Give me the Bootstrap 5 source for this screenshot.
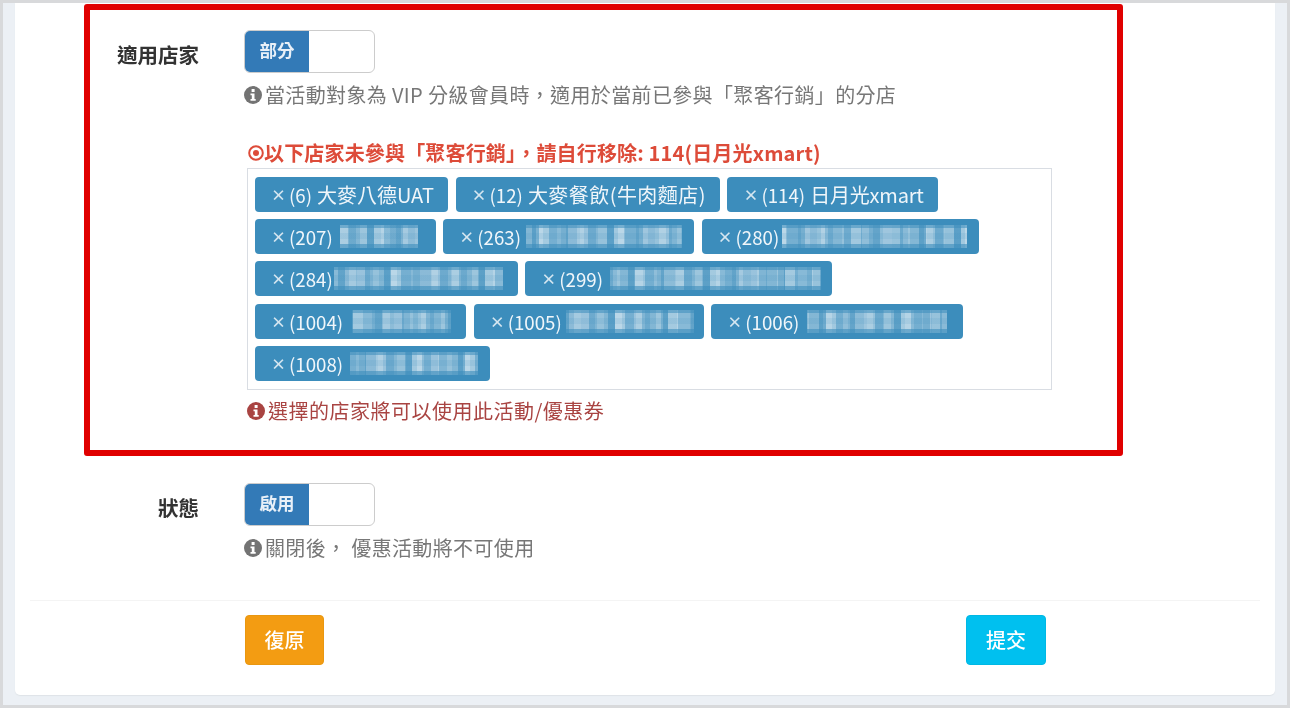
<!doctype html>
<html lang="zh-Hant">
<head>
<meta charset="utf-8">
<title>優惠活動</title>
<link href="https://cdn.jsdelivr.net/npm/bootstrap@5.3.0/dist/css/bootstrap.min.css" rel="stylesheet">
<style>
html,body{margin:0;height:711px;overflow:hidden;background:#fff}
body{font-family:"Noto Sans CJK TC","Liberation Sans",sans-serif;color:#333}
.frame{width:1290px;height:708px;border:3px solid #d8d9db;background:#ecf0f5;padding:0 12px 10px;filter:blur(.6px)}
.panel{background:#fff;height:100%;border-radius:0 0 5px 5px;box-shadow:0 1px 1px #dfe3e8;padding-top:1px;position:relative}
.redbox{margin-left:69px;width:1039px;height:452px;border:6px solid #e00000;border-radius:3px;padding-top:20px}
.field{display:flex;align-items:flex-start}
.field-status{margin-left:75px;margin-top:27px}
.lbl{width:109px;flex:none;text-align:right;font-size:20.5px;font-weight:700;line-height:28px;padding-top:10px;margin-right:45px}
.sw{display:flex;width:131px;height:43px;border:1px solid #ccc;border-radius:6px;overflow:hidden;background:#fff}
.sw-on{width:64px;background:#337ab7;color:#e8f0f8;font-size:17.5px;font-weight:700;display:flex;align-items:center;justify-content:center;padding-bottom:3px;line-height:1}
.hint{font-size:20px;line-height:28px;color:#777;margin-top:8px;display:flex;align-items:center;letter-spacing:.36px;white-space:nowrap}
.hint svg{margin-right:3px;flex:none}
.warn{color:#dd4b39;font-weight:700;font-size:20px;line-height:26px;margin:31px 0 0 4px;display:flex;align-items:center;white-space:nowrap;letter-spacing:.17px}
.picker{width:805px;height:222px;margin:2px 0 0 3px;border:1px solid #d9dde3;padding:8px 7px 0;display:flex;flex-wrap:wrap;align-content:flex-start;column-gap:7.5px;row-gap:7.2px}
.tagx{height:35px;background:#3c8dbc;color:#f0f6fa;border-radius:4px;font-size:18.7px;line-height:35px;padding:0 14px 0 16px;display:flex;align-items:center;white-space:nowrap;font-weight:400}
.tagx .xm{font-size:15px;width:11px;margin-right:7px;font-weight:700;color:#d5e6f0;line-height:1;text-align:center}
.tagx .nm{margin-left:5px;font-size:20px}
.tagx .nm-wide{letter-spacing:.45px}
.tagx .nm-tight{letter-spacing:-.2px}
.mos{display:block;height:23px;flex:none;
 background-image:
 linear-gradient(180deg,rgba(60,141,188,.55) 0 3px,transparent 3px 8px,rgba(60,141,188,.12) 8px 14px,transparent 14px 19px,rgba(60,141,188,.6) 19px),
 repeating-linear-gradient(90deg,rgba(255,255,255,.1) 0 9px,rgba(60,141,188,.1) 9px 20px,rgba(255,255,255,.16) 20px 27px,rgba(60,141,188,.08) 27px 41px),
 repeating-linear-gradient(90deg,rgba(255,255,255,.52) 0 8px,rgba(255,255,255,.28) 8px 16px,rgba(255,255,255,.4) 16px 27px,rgba(255,255,255,.18) 27px 34px,rgba(255,255,255,.58) 34px 44px,rgba(255,255,255,.32) 44px 56px,rgba(255,255,255,.22) 56px 63px,rgba(255,255,255,.45) 63px 75px)}
.m207{width:78px;margin:0 4px 0 7px}
.m263{width:156px;margin:0 -2px 0 5px;background-position:0 0,-10px 0,-21px 0}
.m280{width:185px;margin:0 -2px 0 3px;background-position:0 0,-22px 0,-40px 0}
.m284{width:169px;margin:0 1px 0 1px;background-position:0 0,-5px 0,-52px 0}
.m299{width:211px;margin:0 -3px 0 7px;background-position:0 0,-17px 0,-9px 0}
.m1004{width:99px;margin:0 1px 0 9px;background-position:0 0,-30px 0,-33px 0}
.m1005{width:128px;margin:0 -4px 0 4px;background-position:0 0,-12px 0,-60px 0}
.m1006{width:140px;margin:0 2px 0 8px;background-position:0 0,-25px 0,-15px 0}
.m1008{width:128px;margin:0 -2px 0 7px;background-position:0 0,-35px 0,-47px 0}
.err{color:#a94442;font-size:20px;line-height:28px;margin:7px 0 0 3px;display:flex;align-items:center;letter-spacing:.5px;white-space:nowrap}
.err svg{margin-right:3px}
.rule{height:1px;background:#f4f4f4;margin:38px 15px 0 15px}
.actions{display:flex;padding:14px 0 0 230px}
.act{width:80px;height:50px;border-radius:4px;font-size:20px;font-weight:500;color:#fff;border:1px solid transparent;padding:0;line-height:1}
.act:hover{color:#fff}
.act-warn{width:79px;background:#f39c12;border-color:#e99710}
.act-info{background:#00c0ef;border-color:#00b8e4;margin-left:642px}
</style>
</head>
<body>
<div class="frame">
<div class="panel">
  <div class="redbox">
    <div class="field">
      <div class="lbl">適用店家</div>
      <div>
        <div class="sw"><div class="sw-on">部分</div></div>
        <div class="hint"><svg width="18" height="18" viewBox="0 0 18 18"><circle cx="9" cy="9" r="9" fill="#737373"/><rect x="7.6" y="3" width="3" height="3" fill="#fff"/><path d="M6.5 7.5h4v5.5h1.2v1.8H6.5V13h1.3V9.3H6.5z" fill="#fff"/></svg>當活動對象為 VIP 分級會員時，適用於當前已參與「聚客行銷」的分店</div>
      </div>
    </div>
    <div class="field">
      <div class="lbl"></div>
      <div>
        <div class="warn"><svg width="16" height="16" viewBox="0 0 16 16"><circle cx="8" cy="8" r="6.8" fill="none" stroke="#dd4b39" stroke-width="2"/><circle cx="8" cy="8" r="3" fill="#dd4b39"/></svg>以下店家未參與「聚客行銷」，請自行移除: 114(日月光xmart)</div>
        <div class="picker">
          <span class="tagx"><span class="xm">×</span>(6)<span class="nm">大麥八德UAT</span></span>
          <span class="tagx"><span class="xm">×</span>(12)<span class="nm nm-wide">大麥餐飲(牛肉麵店)</span></span>
          <span class="tagx"><span class="xm">×</span>(114)<span class="nm nm-tight">日月光xmart</span></span>
          <span class="tagx"><span class="xm">×</span>(207)<span class="mos m207"></span></span>
          <span class="tagx"><span class="xm">×</span>(263)<span class="mos m263"></span></span>
          <span class="tagx"><span class="xm">×</span>(280)<span class="mos m280"></span></span>
          <span class="tagx"><span class="xm">×</span>(284)<span class="mos m284"></span></span>
          <span class="tagx"><span class="xm">×</span>(299)<span class="mos m299"></span></span>
          <span class="tagx"><span class="xm">×</span>(1004)<span class="mos m1004"></span></span>
          <span class="tagx"><span class="xm">×</span>(1005)<span class="mos m1005"></span></span>
          <span class="tagx"><span class="xm">×</span>(1006)<span class="mos m1006"></span></span>
          <span class="tagx"><span class="xm">×</span>(1008)<span class="mos m1008"></span></span>
        </div>
        <div class="err"><svg width="18" height="18" viewBox="0 0 18 18"><circle cx="9" cy="9" r="9" fill="#a94442"/><rect x="7.6" y="3" width="3" height="3" fill="#fff"/><path d="M6.5 7.5h4v5.5h1.2v1.8H6.5V13h1.3V9.3H6.5z" fill="#fff"/></svg>選擇的店家將可以使用此活動/優惠券</div>
      </div>
    </div>
  </div>
  <div class="field field-status">
    <div class="lbl">狀態</div>
    <div>
      <div class="sw"><div class="sw-on">啟用</div></div>
      <div class="hint"><svg width="18" height="18" viewBox="0 0 18 18"><circle cx="9" cy="9" r="9" fill="#737373"/><rect x="7.6" y="3" width="3" height="3" fill="#fff"/><path d="M6.5 7.5h4v5.5h1.2v1.8H6.5V13h1.3V9.3H6.5z" fill="#fff"/></svg>關閉後， 優惠活動將不可使用</div>
    </div>
  </div>
  <div class="rule"></div>
  <div class="actions">
    <button type="button" class="btn act act-warn">復原</button>
    <button type="button" class="btn act act-info">提交</button>
  </div>
</div>
</div>
<script src="https://cdn.jsdelivr.net/npm/bootstrap@5.3.0/dist/js/bootstrap.bundle.min.js"></script>
</body>
</html>
